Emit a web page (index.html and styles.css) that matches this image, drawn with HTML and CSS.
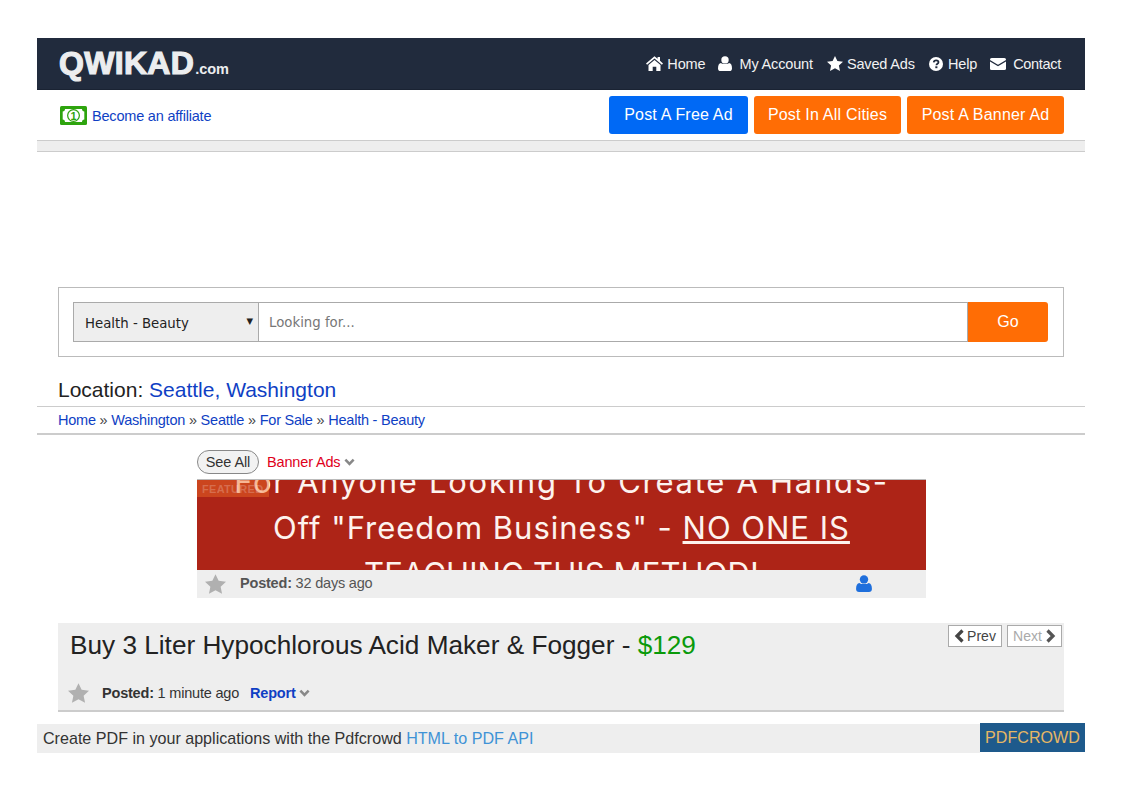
FILE: index.html
```html
<!DOCTYPE html>
<html lang="en">
<head>
<meta charset="utf-8">
<title>Buy 3 Liter Hypochlorous Acid Maker &amp; Fogger</title>
<link rel="stylesheet" href="styles.css">
</head>
<body>
<div class="page">
  <header class="topbar">
    <a class="logo"><span class="logo-main">QWIKAD</span><span class="logo-com">.com</span></a>
    <nav class="nav">
      <a class="nav-item nav-home"><svg class="ico ico-home" viewBox="0 0 17 15"><path d="M8.500 0.200 L11.600 2.800 V1 H14 V4.800 L17 7.400 L15.900 8.700 L8.500 2.500 L1.100 8.700 L0 7.400 Z M8.500 4 L14.500 9 V15 H10.300 V10.700 H6.700 V15 H2.500 V9 Z" fill="#fff"/></svg>Home</a>
      <a class="nav-item"><svg class="ico ico-user" viewBox="0 0 14 15"><circle cx="7" cy="3.900" r="3.700" fill="#fff"/><path d="M3 7 C4 8.400 10 8.400 11 7 C13 7.400 14 9 14 12.400 C14 14 13 15 11.400 15 H2.600 C1 15 0 14 0 12.400 C0 9 1 7.400 3 7 Z" fill="#fff"/></svg>My Account</a>
      <a class="nav-item"><svg class="ico ico-star" viewBox="0 0 16 15"><path d="M8 0 L10.400 5 L16 5.700 L11.900 9.500 L13 15 L8 12.300 L3 15 L4.100 9.500 L0 5.700 L5.600 5 Z" fill="#fff"/></svg>Saved Ads</a>
      <a class="nav-item"><svg class="ico ico-help" viewBox="0 0 14 14"><circle cx="7" cy="7" r="7" fill="#fff"/><path d="M4.700 5.300 C4.900 3.900 5.900 3.300 7.100 3.300 C8.500 3.300 9.500 4.100 9.500 5.200 C9.500 6.700 7.400 6.700 7.400 8.300" fill="none" stroke="#212b3d" stroke-width="1.700"/><rect x="6.300" y="9.300" width="2.100" height="1.900" fill="#212b3d"/></svg>Help</a>
      <a class="nav-item nav-mail"><svg class="ico ico-mail" viewBox="0 0 16 12"><rect width="16" height="12" rx="1.600" fill="#fff"/><path d="M-0.500 2.400 L8 7.600 L16.500 2.400" fill="none" stroke="#212b3d" stroke-width="1.300"/></svg>Contact</a>
    </nav>
  </header>

  <div class="actionbar">
    <a class="affiliate"><svg class="money" viewBox="0 0 27 19"><rect width="27" height="19" rx="1.500" fill="#2ea40e"/><path d="M5 3 H22 C22 4.500 22.800 5.500 24.300 5.500 V13.500 C22.800 13.500 22 14.500 22 16 H5 C5 14.500 4.200 13.500 2.700 13.500 V5.500 C4.200 5.500 5 4.500 5 3 Z" fill="#fff"/><circle cx="13.500" cy="9.500" r="6.500" fill="#2ea40e"/><circle cx="13.500" cy="9.500" r="5.200" fill="#fff"/><text class="money-digit" x="13.500" y="13.500" text-anchor="middle">1</text></svg>Become an affiliate</a>
    <div class="actions">
      <a class="btn btn-blue">Post A Free Ad</a>
      <a class="btn btn-orange btn-cities">Post In All Cities</a>
      <a class="btn btn-orange btn-banner">Post A Banner Ad</a>
    </div>
  </div>
  <div class="strip"></div>
  <div class="adspace"></div>

  <form class="searchbox">
    <div class="select"><span>Health - Beauty</span><span class="select-arrow">▼</span></div>
    <div class="search-input">Looking for...</div>
    <div class="go">Go</div>
  </form>

  <h2 class="location">Location: <a>Seattle, Washington</a></h2>
  <div class="crumbs"><a>Home</a> » <a>Washington</a> » <a>Seattle</a> » <a>For Sale</a> » <a>Health - Beauty</a></div>

  <section class="banners">
    <div class="banners-head">
      <a class="pill">See All</a>
      <a class="banner-title">Banner Ads</a>
      <svg class="chev" viewBox="0 0 12 8"><path d="M1.500 1.500 L6 6 L10.500 1.500" fill="none" stroke="#888" stroke-width="2.800"/></svg>
    </div>
    <div class="banner">
      <span class="featured">FEATURED</span>
      <div class="banner-text">
        <div class="line-one">For Anyone Looking To Create A Hands-</div>
        <div class="line-two">Off "Freedom Business" - <u>NO ONE IS</u></div>
        <div class="line-three">TEACHING THIS METHOD!</div>
      </div>
    </div>
    <div class="banner-foot">
      <svg class="star-grey" viewBox="0 0 16 15"><path d="M8 0 L10.400 5 L16 5.700 L11.900 9.500 L13 15 L8 12.300 L3 15 L4.100 9.500 L0 5.700 L5.600 5 Z" fill="#b0b0b0"/></svg>
      <span class="posted posted-banner"><b>Posted:</b> 32 days ago</span>
      <svg class="user-blue" viewBox="0 0 14 15"><circle cx="7" cy="3.900" r="3.700" fill="#1f6fdc"/><path d="M3 7 C4 8.400 10 8.400 11 7 C13 7.400 14 9 14 12.400 C14 14 13 15 11.400 15 H2.600 C1 15 0 14 0 12.400 C0 9 1 7.400 3 7 Z" fill="#1f6fdc"/></svg>
    </div>
  </section>

  <section class="listing">
    <div class="listing-head">
      <h1 class="listing-title">Buy 3 Liter Hypochlorous Acid Maker &amp; Fogger - <span class="price">$129</span></h1>
      <div class="pager">
        <a class="pager-btn"><svg class="pager-ico" viewBox="0 0 10 14"><path d="M8 1.500 L2.500 7 L8 12.500" fill="none" stroke="#444" stroke-width="3.200"/></svg>Prev</a>
        <a class="pager-btn pager-off">Next<svg class="pager-ico" viewBox="0 0 10 14"><path d="M2 1.500 L7.500 7 L2 12.500" fill="none" stroke="#555" stroke-width="3.200"/></svg></a>
      </div>
    </div>
    <div class="listing-meta">
      <svg class="star-grey" viewBox="0 0 16 15"><path d="M8 0 L10.400 5 L16 5.700 L11.900 9.500 L13 15 L8 12.300 L3 15 L4.100 9.500 L0 5.700 L5.600 5 Z" fill="#b0b0b0"/></svg>
      <span class="posted posted-dark"><b>Posted:</b> 1 minute ago</span>
      <a class="report">Report</a>
      <svg class="chev" viewBox="0 0 12 8"><path d="M1.500 1.500 L6 6 L10.500 1.500" fill="none" stroke="#888" stroke-width="2.800"/></svg>
    </div>
  </section>

  <footer class="pdfbar">
    <div class="pdf-text">Create PDF in your applications with the Pdfcrowd <a>HTML to PDF API</a></div>
    <a class="pdf-brand">PDFCROWD</a>
  </footer>
</div>
</body>
</html>
```
FILE: styles.css
```css
* { box-sizing: border-box; }
html, body { margin: 0; padding: 0; background: #fff; }
body { font-family: "Liberation Sans", Arial, sans-serif; color: #222; }
a { color: #0f3fc4; text-decoration: none; }
.page { width: 1048px; margin: 38px 0 0 37px; }

.topbar { height: 52px; background: #212b3d; border-bottom: 1px solid #1a2333; display: flex; align-items: center; justify-content: space-between; padding: 0 24px 0 22px; }
.logo { display: flex; align-items: baseline; }
.logo-main { font-family: "Liberation Sans", sans-serif; font-weight: 700; font-size: 32px; letter-spacing: 0.3px; color: #ecedef; -webkit-text-stroke: 1.200px #ecedef; paint-order: stroke; }
.logo-com { font-family: "Liberation Sans", sans-serif; font-weight: 700; font-size: 14.500px; color: #ecedef; margin-left: 1px; }
.nav { display: flex; gap: 14px; font-size: 14.500px; }
.nav-item { display: flex; align-items: center; color: #f2f2f2; letter-spacing: -0.15px; }
.nav-home { margin-right: -1px; }
.nav-mail { margin-left: -1px; letter-spacing: -0.3px; }
.ico { display: block; margin-right: 4px; flex: none; }
.ico-home { width: 17px; height: 15px; }
.ico-user { width: 14px; height: 15px; margin-right: 7px; }
.ico-star { width: 16px; height: 15px; }
.ico-help { width: 14px; height: 14px; margin-right: 5px; }
.ico-mail { width: 16px; height: 12px; margin-right: 7px; }

.actionbar { height: 51px; border-bottom: 1px solid #ccc; display: flex; align-items: flex-start; justify-content: space-between; padding: 6px 21px 0 23px; }
.affiliate { display: flex; align-items: center; font-size: 14.500px; margin-top: 10px; letter-spacing: -0.2px; }
.money { width: 27px; height: 19px; margin-right: 5px; flex: none; }
.money-digit { font-family: "Liberation Sans", sans-serif; font-size: 11px; font-weight: 700; fill: #2ea40e; letter-spacing: 0; }
.actions { display: flex; gap: 6px; }
.btn { height: 38px; display: flex; align-items: center; justify-content: center; font-size: 16px; letter-spacing: 0.2px; color: #fff; border-radius: 3px; }
.btn-blue { width: 139px; background: #0069f5; }
.btn-orange { background: #ff6d05; }
.btn-cities { width: 147px; }
.btn-banner { width: 157px; }

.strip { height: 11px; background: #eee; border-bottom: 1px solid #ccc; }
.adspace { height: 135px; }

.searchbox { margin: 0 21px; height: 70px; border: 1px solid #bbb; padding: 14px 15px 14px 14px; display: flex; }
.select { width: 186px; height: 40px; background: #eee; border: 1px solid #aaa; display: flex; align-items: center; justify-content: space-between; padding: 2px 5px 0 11px; font-family: "DejaVu Sans", sans-serif; font-size: 13.300px; color: #222; }
.select-arrow { font-size: 8.500px; margin-bottom: 4px; }
.search-input { flex: 1; height: 40px; border: 1px solid #aaa; border-left: 0; display: flex; align-items: center; padding-left: 10px; font-family: "DejaVu Sans", sans-serif; font-size: 13.300px; color: #777; }
.go { width: 80px; height: 40px; background: #ff6d05; color: #fff; display: flex; align-items: center; justify-content: center; font-size: 16px; border-radius: 0 3px 3px 0; }

.location { margin: 20px 0 0; padding-left: 21px; height: 29px; font-size: 21px; font-weight: 400; line-height: 25px; }
.crumbs { height: 29px; border-top: 1px solid #ccc; border-bottom: 2px solid #ccc; padding-left: 21px; font-size: 14.500px; line-height: 27px; color: #444; letter-spacing: -0.22px; }

.banners { width: 729px; margin: 15px 0 0 160px; }
.banners-head { height: 29px; display: flex; align-items: flex-start; }
.pill { width: 62px; height: 24px; border: 1px solid #888; border-radius: 12px; background: #f2f2f2; color: #333; font-size: 14.500px; letter-spacing: -0.1px; display: flex; align-items: center; justify-content: center; }
.banner-title { color: #e0001b; font-size: 14.500px; line-height: 24px; margin-left: 8px; letter-spacing: -0.15px; }
.banners-head .chev { margin: 8px 0 0 4px; }
.chev { width: 11px; height: 8px; flex: none; }
.banner { position: relative; height: 91px; background: #ad2417; border-top: 1px solid #bbb; overflow: hidden; }
.banner-text { margin-top: -21px; font-family: Inter, sans-serif; font-size: 31px; line-height: 46px; color: #fdf3ee; text-align: center; white-space: nowrap; }
.line-one { letter-spacing: 1.730px; }
.line-two { letter-spacing: 1px; }
.line-three { letter-spacing: 0.100px; }
.featured { position: absolute; left: 0; top: 0; width: 72px; height: 17px; background: rgba(240,110,40,.45); color: rgba(255,255,255,.22); font-size: 11px; font-weight: 700; line-height: 18px; padding-left: 5px; letter-spacing: .3px; }
.banner-foot { height: 28px; background: #eee; display: flex; align-items: center; padding: 0 54px 1px 8px; }
.star-grey { width: 21px; height: 20px; flex: none; }
.posted { margin-left: 14px; font-size: 14.500px; color: #555; letter-spacing: -0.2px; }
.posted-banner { margin-bottom: 1px; }
.user-blue { width: 16px; height: 17px; margin-left: auto; flex: none; }

.listing { margin: 25px 21px 0; height: 89px; background: #eee; border-bottom: 2px solid #ccc; }
.listing-head { height: 57px; display: flex; justify-content: space-between; align-items: flex-start; padding: 0 2px 0 12px; }
.listing-title { margin: 6px 0 0; font-size: 26.200px; font-weight: 400; line-height: 32px; }
.price { color: #0a9a0a; }
.pager { display: flex; gap: 5px; margin-top: 2px; }
.pager-btn { height: 22px; width: 54px; border: 1px solid #aaa; background: #fff; color: #444; font-size: 14px; display: flex; align-items: center; justify-content: center; }
.pager-off { width: 55px; color: #aaa; }
.pager-ico { width: 11px; height: 14px; margin: 0 2px 0 0; }
.pager-off .pager-ico { margin: 0 0 0 3px; }
.listing-meta { display: flex; align-items: center; height: 26px; padding-left: 10px; }
.posted-dark { color: #333; margin-left: 13px; }
.report { font-size: 14.500px; font-weight: 700; margin-left: 11px; letter-spacing: -0.2px; }
.listing-meta .chev { margin-left: 3px; }

.pdfbar { margin-top: 11px; height: 30px; display: flex; }
.pdf-text { flex: 1; height: 29px; margin-top: 1px; background: #eee; padding-left: 6px; font-size: 16.100px; line-height: 28px; color: #333; }
.pdf-text a { color: #3f93d6; }
.pdf-brand { width: 105px; height: 29px; background: #1e5a8c; color: #e6b764; font-size: 16.100px; line-height: 29px; text-align: center; }
```
